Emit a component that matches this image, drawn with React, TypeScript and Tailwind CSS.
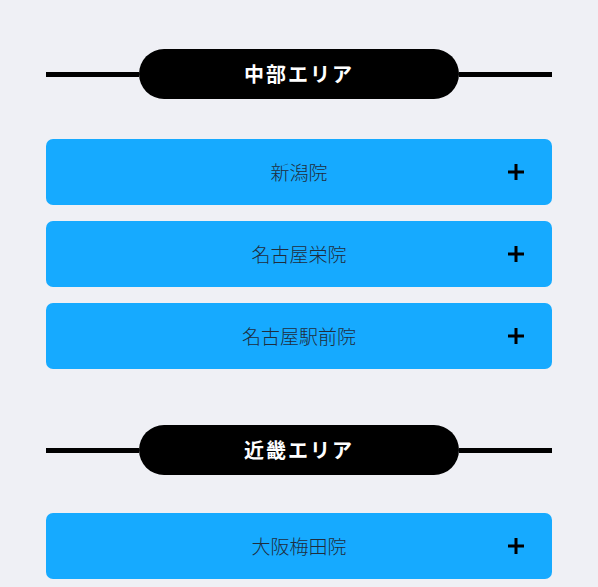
import React from 'react';

interface Area {
  name: string;
  clinics: string[];
}

const areas: Area[] = [
  { name: '中部エリア', clinics: ['新潟院', '名古屋栄院', '名古屋駅前院'] },
  { name: '近畿エリア', clinics: ['大阪梅田院'] },
];

const font = { fontFamily: '"Noto Sans CJK JP", "Noto Sans", sans-serif' };

const Plus = () => (
  <svg width="16" height="16" viewBox="0 0 16 16" className="shrink-0">
    <rect x="0" y="6.5" width="16" height="3" fill="#000" />
    <rect x="6.5" y="0" width="3" height="16" fill="#000" />
  </svg>
);

const AreaHeading: React.FC<{ title: string }> = ({ title }) => (
  <div className="flex h-[50px] items-center">
    <div className="h-[5px] flex-1 bg-black" />
    <div className="flex h-[50px] w-[320px] items-center justify-center rounded-[25px] bg-black">
      <span className="text-[20px] font-bold tracking-[2px] text-white">{title}</span>
    </div>
    <div className="h-[5px] flex-1 bg-black" />
  </div>
);

const ClinicRow: React.FC<{ name: string }> = ({ name }) => (
  <div className="grid h-[66px] grid-cols-[1fr_auto_1fr] items-center rounded-[7px] bg-[#16aaff] px-[28px] pb-[2px]">
    <div />
    <span className="text-[19px] font-light leading-none text-[#1f2d3d]">{name}</span>
    <div className="flex justify-end pt-[2px]">
      <Plus />
    </div>
  </div>
);

export default function App() {
  return (
    <div className="min-h-[587px] bg-[#eff0f5] px-[46px] pt-[49px]" style={font}>
      {areas.map((area, i) => (
        <section key={area.name} className={i > 0 ? 'mt-[56px]' : ''}>
          <AreaHeading title={area.name} />
          <div className={`${i > 0 ? 'mt-[38px]' : 'mt-[40px]'} flex flex-col gap-[16px]`}>
            {area.clinics.map((c) => (
              <ClinicRow key={c} name={c} />
            ))}
          </div>
        </section>
      ))}
    </div>
  );
}
